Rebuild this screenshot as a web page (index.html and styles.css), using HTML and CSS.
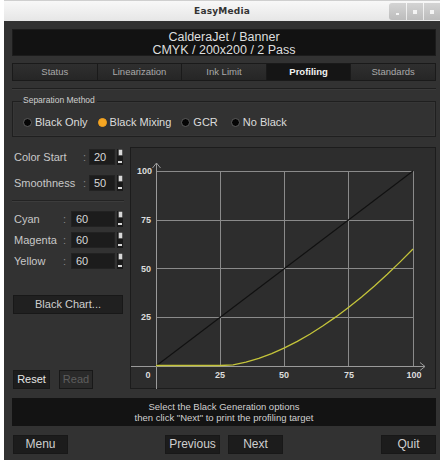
FILE: index.html
```html
<!DOCTYPE html>
<html>
<head>
<meta charset="utf-8">
<link rel="stylesheet" href="styles.css">
</head>
<body>
<div class="window">
  <div class="titlebar">
    <span class="title">EasyMedia</span>
    <div class="wbtns">
      <span class="wbtn"><i class="ico-min"></i></span>
      <span class="wbtn"><i class="ico-max"></i></span>
      <span class="wbtn"><i class="ico-close"></i></span>
    </div>
  </div>
  <div class="body">
    <div class="header">
      <div>CalderaJet / Banner</div>
      <div>CMYK / 200x200 / 2 Pass</div>
    </div>
    <div class="tabs">
      <div class="tab">Status</div>
      <div class="tab">Linearization</div>
      <div class="tab">Ink Limit</div>
      <div class="tab active">Profiling</div>
      <div class="tab">Standards</div>
    </div>
    <div class="sep"></div>
    <div class="group">
      <span class="legend">Separation Method</span>
      <div class="radios">
        <label class="radio"><i class="dot"></i>Black Only</label>
        <label class="radio"><i class="dot on"></i>Black Mixing</label>
        <label class="radio"><i class="dot"></i>GCR</label>
        <label class="radio"><i class="dot"></i>No Black</label>
      </div>
    </div>
    <div class="main">
      <div class="left">
        <div class="field f1"><span class="lbl">Color Start</span><span class="colon">:</span><span class="inp short">20</span><span class="spin"><i class="plus"></i><i class="minus"></i></span></div>
        <div class="field f2"><span class="lbl">Smoothness</span><span class="colon">:</span><span class="inp short">50</span><span class="spin"><i class="plus"></i><i class="minus"></i></span></div>
        <div class="hr"></div>
        <div class="field c1"><span class="lbl2">Cyan</span><span class="colon c">:</span><span class="inp long">60</span><span class="spin"><i class="plus"></i><i class="minus"></i></span></div>
        <div class="field c2"><span class="lbl2">Magenta</span><span class="colon c">:</span><span class="inp long">60</span><span class="spin"><i class="plus"></i><i class="minus"></i></span></div>
        <div class="field c2"><span class="lbl2">Yellow</span><span class="colon c">:</span><span class="inp long">60</span><span class="spin"><i class="plus"></i><i class="minus"></i></span></div>
        <div class="btn chart-btn">Black Chart...</div>
        <div class="spacer"></div>
        <div class="small-btns">
          <div class="btn sbtn">Reset</div>
          <div class="btn sbtn disabled">Read</div>
        </div>
      </div>
      <div class="chart">
        <svg width="305" height="241" viewBox="0 0 305 241">
          <g stroke="#8a8a8a" stroke-width="1" fill="none">
            <line x1="25" y1="23.5" x2="282" y2="23.5"/>
            <line x1="25" y1="72.5" x2="282" y2="72.5"/>
            <line x1="25" y1="120.5" x2="282" y2="120.5"/>
            <line x1="25" y1="169.5" x2="282" y2="169.5"/>
            <line x1="89.5" y1="23" x2="89.5" y2="218"/>
            <line x1="153.5" y1="23" x2="153.5" y2="218"/>
            <line x1="217.5" y1="23" x2="217.5" y2="218"/>
            <line x1="282.5" y1="23" x2="282.5" y2="218"/>
          </g>
          <g stroke="#9a9a9a" stroke-width="1" fill="none">
            <line x1="25.5" y1="15" x2="25.5" y2="241"/>
            <polyline points="21.5,20 25.5,15 29.5,20"/>
            <line x1="0" y1="218.5" x2="294" y2="218.5"/>
            <polyline points="289,214.5 294,218.5 289,222.5"/>
          </g>
          <line x1="25" y1="218" x2="282" y2="23" stroke="#111" stroke-width="1.2"/>
          <polyline fill="none" stroke="#c4c43a" stroke-width="1.3" points="25,217.5 89.25,217.5 102.1,216.8 114.95,214.2 127.8,210.4 140.65,205.6 153.5,199.9 166.35,193.4 179.2,186 192.05,177.8 204.9,168.9 217.75,159.3 230.6,148.9 243.45,137.9 256.3,126.3 269.15,113.9 282,101"/>
          <g fill="#dcdcdc" font-family="Liberation Sans, Arial, sans-serif" font-size="9" font-weight="bold">
            <text x="21" y="26" text-anchor="end">100</text>
            <text x="20" y="75" text-anchor="end">75</text>
            <text x="20" y="124" text-anchor="end">50</text>
            <text x="20" y="172" text-anchor="end">25</text>
            <text x="17" y="230" text-anchor="middle">0</text>
            <text x="89" y="230" text-anchor="middle">25</text>
            <text x="153" y="230" text-anchor="middle">50</text>
            <text x="218" y="230" text-anchor="middle">75</text>
            <text x="283" y="230" text-anchor="middle">100</text>
          </g>
        </svg>
      </div>
    </div>
    <div class="msg">
      <div>Select the Black Generation options</div>
      <div>then click "Next" to print the profiling target</div>
    </div>
    <div class="footer">
      <div class="btn fbtn">Menu</div>
      <div class="btn fbtn prev">Previous</div>
      <div class="btn fbtn next">Next</div>
      <div class="btn fbtn quit">Quit</div>
    </div>
  </div>
</div>
</body>
</html>
```

FILE: styles.css
```css
* { box-sizing: border-box; }
html, body { margin: 0; padding: 0; background: #fff; }
body { width: 443px; height: 463px; font-family: "Liberation Sans", Arial, sans-serif; }

.window {
  margin-left: 4px;
  width: 436px;
  height: 460px;
  background: #323232;
  display: flex;
  flex-direction: column;
}

.titlebar {
  height: 22px;
  background: linear-gradient(#f8f8f8, #e6e6e6);
  border-top: 1px solid #cfcfcf;
  display: flex;
  align-items: center;
  justify-content: center;
  position: relative;
}
.title {
  font-family: "DejaVu Sans", sans-serif;
  font-weight: bold;
  font-size: 9px;
  color: #333;
  letter-spacing: 0.2px;
}
.wbtns {
  position: absolute;
  right: 0;
  top: 2px;
  display: flex;
  gap: 1px;
}
.wbtn {
  width: 16px;
  height: 17px;
  background: linear-gradient(#d4d4d4, #bcbcbc);
  display: flex;
  align-items: center;
  justify-content: center;
}
.wbtn:first-child { width: 17px; border-radius: 3px 0 0 3px; }
.wbtn i { display: block; background: #f4f4f4; }
.ico-min { width: 3px; height: 2px; margin-top: 5px; }
.ico-max { width: 4px; height: 4px; }
.ico-close { width: 4px; height: 4px; }

.body {
  flex: 1;
  padding: 8px 4px 6px 8px;
  display: flex;
  flex-direction: column;
}

.header {
  height: 27px;
  background: #121212;
  border: 1px solid #1c1c1c;
  color: #dedede;
  font-size: 12.5px;
  line-height: 12.5px;
  text-align: center;
  padding-top: 1px;
}

.tabs {
  margin-top: 7px;
  height: 18px;
  display: flex;
  background: #1a1a1a;
  gap: 1px;
  padding: 1px;
}
.tab {
  flex: 1;
  background: linear-gradient(#2f2f2f, #262626);
  color: #a9a9a9;
  font-size: 9.5px;
  line-height: 16px;
  text-align: center;
}
.tab.active {
  background: #151515;
  color: #f2f2f2;
  font-weight: bold;
}

.sep {
  margin-top: 7px;
  height: 2px;
  border-top: 1px solid #1e1e1e;
  border-bottom: 1px solid #3a3a3a;
}

.group {
  margin-top: 11px;
  height: 36px;
  border: 1px solid #1f1f1f;
  box-shadow: inset 0 0 0 1px #363636;
  position: relative;
  padding: 14px 0 0 10px;
}
.legend {
  position: absolute;
  left: 9px;
  top: -7px;
  background: #323232;
  padding: 0 2px 0 1px;
  font-size: 8.5px;
  color: #cfcfcf;
}
.radios {
  display: flex;
  align-items: center;
  font-size: 11px;
  color: #dcdcdc;
}
.radio {
  display: flex;
  align-items: center;
  margin-right: 10px;
}
.radio:nth-child(3) { margin-right: 13px; }
.dot {
  display: inline-block;
  flex-shrink: 0;
  width: 9px;
  height: 9px;
  border-radius: 50%;
  background: #050505;
  border: 1px solid #5c5c5c;
  margin-right: 3px;
}
.dot.on {
  background: #f5a623;
  border-color: #f0a020;
}

.main {
  margin-top: 10px;
  height: 242px;
  display: flex;
}
.left {
  width: 119px;
  display: flex;
  flex-direction: column;
}
.field {
  display: flex;
  align-items: center;
  height: 16px;
  font-size: 11px;
  color: #c8c8c8;
}
.f1 { margin-top: 2px; }
.f2 { margin-top: 10px; }
.c1 { margin-top: 10px; }
.c2 { margin-top: 5px; }
.lbl { width: 71px; padding-left: 2px; }
.lbl2 { width: 51px; padding-left: 2px; }
.colon { width: 6px; color: #888; }
.colon.c { width: 8px; }
.inp {
  height: 16px;
  background: #1c1c1c;
  border: 1px solid #222;
  color: #d8d8d8;
  font-size: 11px;
  line-height: 14px;
  padding-left: 4px;
}
.short { width: 26px; }
.long { width: 44px; }
.spin {
  margin-left: 2px;
  width: 6px;
  height: 16px;
  background: #1a1a1a;
  display: flex;
  flex-direction: column;
  align-items: center;
  justify-content: space-between;
  padding: 1px 0 2px;
}
.spin i { display: block; background: #d8d8d8; }
.plus { width: 3px; height: 5px; box-shadow: 0 0 0 0.5px #9a9a9a; }
.minus { width: 4px; height: 2px; }

.hr {
  margin-top: 9px;
  height: 1px;
  background: #232323;
  box-shadow: 0 1px 0 #3c3c3c;
  width: 112px;
}

.btn {
  background: #202020;
  border: 1px solid #181818;
  color: #cfcfcf;
  text-align: center;
}
.chart-btn {
  margin-top: 26px;
  margin-left: 1px;
  width: 110px;
  height: 19px;
  font-size: 11px;
  line-height: 17px;
}
.spacer { flex: 1; }
.small-btns {
  display: flex;
  gap: 9px;
  margin-left: 1px;
}
.sbtn {
  width: 37px;
  height: 19px;
  font-size: 11px;
  line-height: 17px;
  background: #1d1d1d;
  color: #e6e6e6;
}
.sbtn.disabled { width: 34px; color: #5e5e5e; background: #2a2a2a; }

.chart {
  width: 306px;
  height: 242px;
  border: 1px solid #1c1c1c;
  background: #2d2d2d;
}
.chart svg { display: block; }

.msg {
  margin-top: 9px;
  height: 28px;
  background: #131313;
  color: #cfcfcf;
  font-size: 9.5px;
  line-height: 11px;
  text-align: center;
  padding-top: 3px;
}

.footer {
  margin-top: 9px;
  display: flex;
  align-items: center;
}
.fbtn {
  width: 55px;
  height: 19px;
  font-size: 12px;
  line-height: 17px;
  background: #1c1c1c;
  margin-left: 1px;
}
.prev { margin-left: 97px; }
.next { margin-left: 8px; }
.quit { margin-left: auto; }
```
